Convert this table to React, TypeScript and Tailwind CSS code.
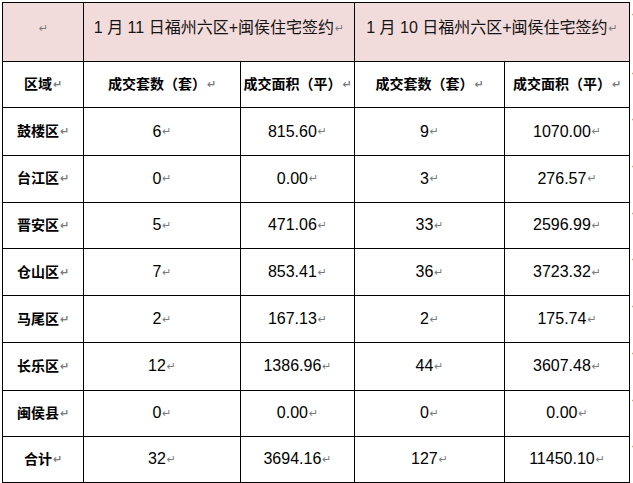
const rows: [string, string, string, string, string][] = [
  ["鼓楼区", "6", "815.60", "9", "1070.00"],
  ["台江区", "0", "0.00", "3", "276.57"],
  ["晋安区", "5", "471.06", "33", "2596.99"],
  ["仓山区", "7", "853.41", "36", "3723.32"],
  ["马尾区", "2", "167.13", "2", "175.74"],
  ["长乐区", "12", "1386.96", "44", "3607.48"],
  ["闽侯县", "0", "0.00", "0", "0.00"],
  ["合计", "32", "3694.16", "127", "11450.10"],
];

const rowHeights = ["h-[47px]", "h-[47px]", "h-[46px]", "h-[47px]", "h-[47px]", "h-[47px]", "h-[46px]", "h-[46px]"];

function Mark() {
  return (
    <span className="ml-[1px] align-middle text-[11px] text-[#7a7a7a] [font-family:'DejaVu_Sans',sans-serif]">↵</span>
  );
}

export default function App() {
  const cell = "border border-black text-center align-middle p-0";
  return (
    <div className="w-[633px] h-[483px] overflow-hidden bg-white pt-[2px] pl-[2px] flex text-black [font-family:'Liberation_Sans','Noto_Sans_CJK_SC',sans-serif]">
      <table className="border-collapse table-fixed w-[627px] shrink-0">
        <colgroup>
          <col className="w-[81px]" />
          <col className="w-[157px]" />
          <col className="w-[114px]" />
          <col className="w-[150px]" />
          <col className="w-[125px]" />
        </colgroup>
        <tbody>
          <tr className="h-[59px] bg-[#f2dbdb]">
            <td className="border border-black text-center align-top pt-[13px]">
              <Mark />
            </td>
            <td colSpan={2} className="border border-black text-center align-top pt-[13px] text-[16px] text-[#141414]">
              1 月 11 日福州六区+闽侯住宅签约<Mark />
            </td>
            <td colSpan={2} className="border border-black text-center align-top pt-[13px] text-[16px] text-[#141414]">
              1 月 10 日福州六区+闽侯住宅签约<Mark />
            </td>
          </tr>
          <tr className="h-[46px] text-[14px] font-bold">
            <td className={cell}>区域<Mark /></td>
            <td className={cell}>成交套数（套）<Mark /></td>
            <td className={cell}>成交面积（平）<Mark /></td>
            <td className={cell}>成交套数（套）<Mark /></td>
            <td className={cell}>成交面积（平）<Mark /></td>
          </tr>
          {rows.map((r, i) => (
            <tr key={r[0]} className={rowHeights[i]}>
              <td className={cell + " text-[14px] font-bold"}>
                {r[0]}
                <Mark />
              </td>
              {r.slice(1).map((v, j) => (
                <td key={j} className={cell + " text-[16px]"}>
                  {v}
                  <Mark />
                </td>
              ))}
            </tr>
          ))}
        </tbody>
      </table>
      <div className="flex flex-col pl-[2px] text-[11px] text-[#7a7a7a] [font-family:'DejaVu_Sans',sans-serif]">
        {["h-[59px]", "h-[46px]", ...rowHeights].map((h, i) => (
          <div key={i} className={h + " pt-[7px] leading-none"}>↵</div>
        ))}
      </div>
    </div>
  );
}
